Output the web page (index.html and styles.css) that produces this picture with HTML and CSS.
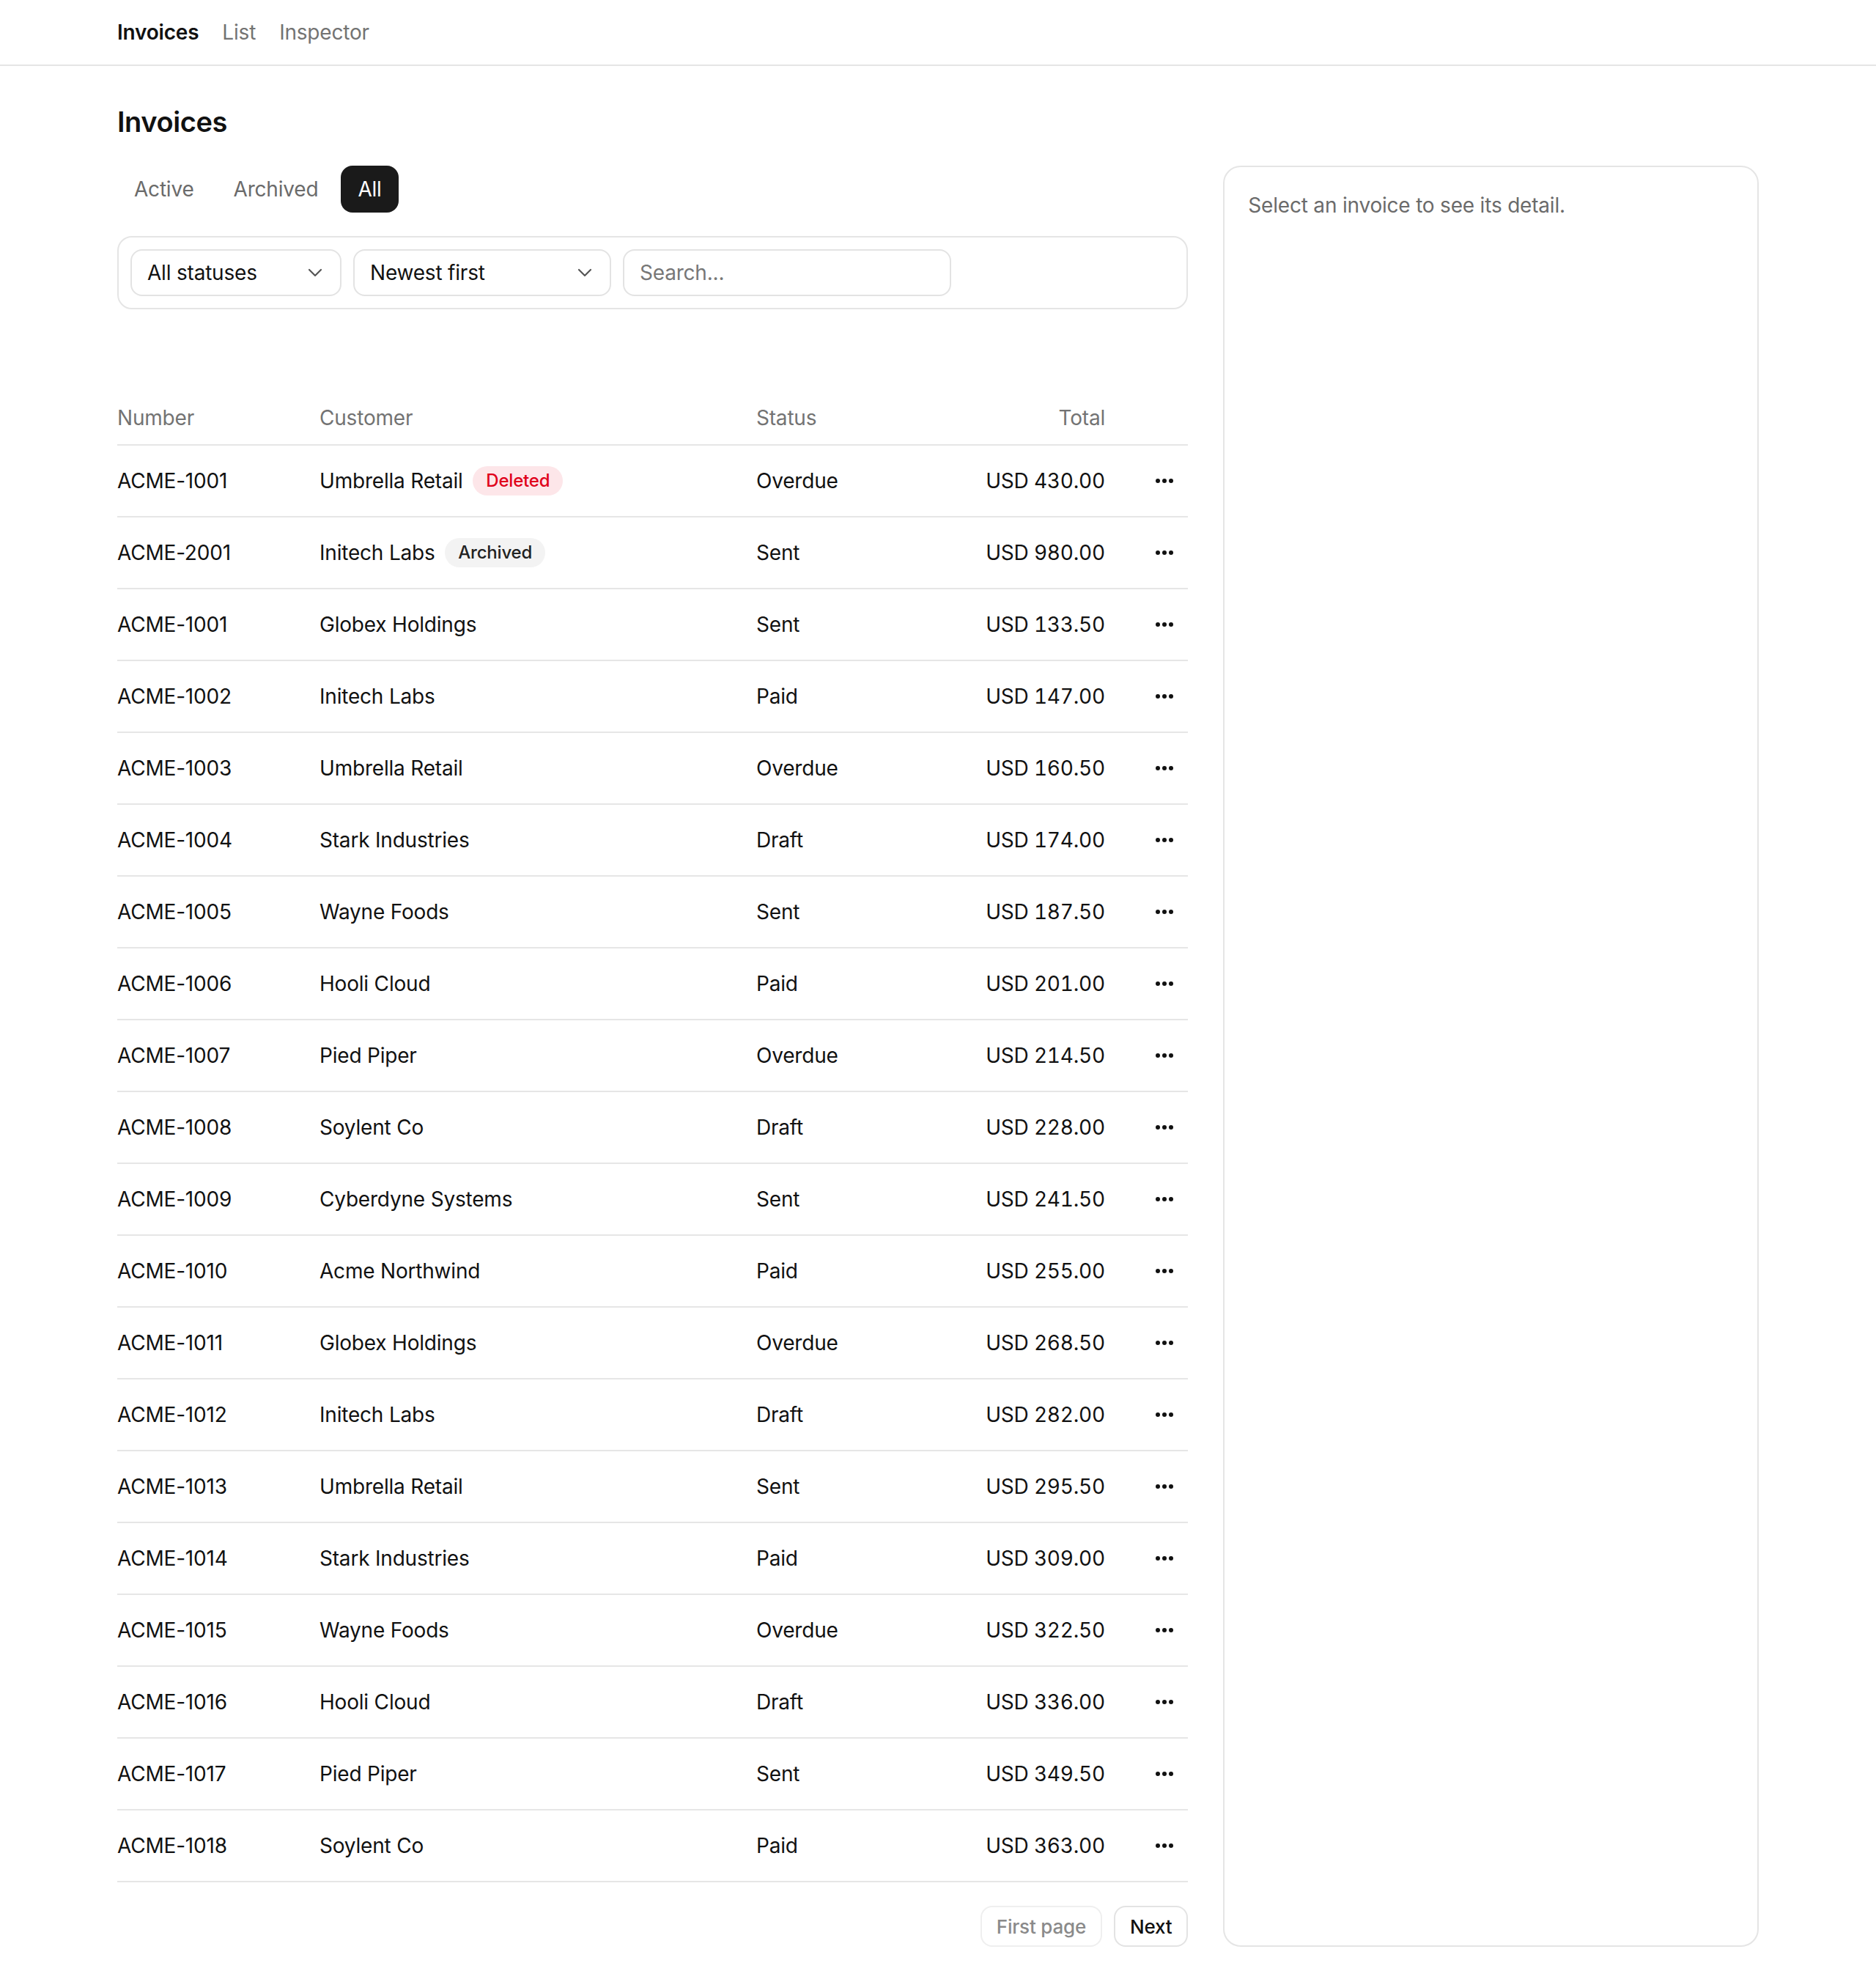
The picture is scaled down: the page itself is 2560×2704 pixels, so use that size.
FILE: index.html
```html
<!DOCTYPE html>
<html lang="en">
<head>
    <meta charset="UTF-8">
    <title>Invoices</title>
    <link rel="stylesheet" href="styles.css">
</head>
<body>
<header class="topbar">
    <nav class="topnav">
        <a href="#" class="active">Invoices</a>
        <a href="#">List</a>
        <a href="#">Inspector</a>
    </nav>
</header>
<main class="page">
    <h1 class="page-title">Invoices</h1>
    <div class="layout">
        <section class="main-col">
            <div class="tabs">
                <button class="tab">Active</button>
                <button class="tab">Archived</button>
                <button class="tab tab-active">All</button>
            </div>
            <div class="filters">
                <div class="dropdown dd-status">
                    <span>All statuses</span>
                    <svg class="chevron" viewBox="0 0 24 24"><path d="M6 9l6 6 6-6"/></svg>
                </div>
                <div class="dropdown dd-sort">
                    <span>Newest first</span>
                    <svg class="chevron" viewBox="0 0 24 24"><path d="M6 9l6 6 6-6"/></svg>
                </div>
                <input class="search" placeholder="Search..."/>
            </div>
            <table class="invoice-table">
                <colgroup>
                    <col class="c-number">
                    <col class="c-customer">
                    <col class="c-status">
                    <col class="c-total">
                    <col class="c-actions">
                </colgroup>
                <thead>
                <tr>
                    <th>Number</th>
                    <th>Customer</th>
                    <th>Status</th>
                    <th class="num">Total</th>
                    <th></th>
                </tr>
                </thead>
                <tbody>
                <tr><td>ACME-1001</td><td>Umbrella Retail <span class="badge badge-deleted">Deleted</span></td><td>Overdue</td><td class="num">USD 430.00</td><td class="act"><button class="more"><svg viewBox="0 0 24 24"><circle cx="3" cy="12" r="3"/><circle cx="12" cy="12" r="3"/><circle cx="21" cy="12" r="3"/></svg></button></td></tr>
                <tr><td>ACME-2001</td><td>Initech Labs <span class="badge badge-archived">Archived</span></td><td>Sent</td><td class="num">USD 980.00</td><td class="act"><button class="more"><svg viewBox="0 0 24 24"><circle cx="3" cy="12" r="3"/><circle cx="12" cy="12" r="3"/><circle cx="21" cy="12" r="3"/></svg></button></td></tr>
                <tr><td>ACME-1001</td><td>Globex Holdings</td><td>Sent</td><td class="num">USD 133.50</td><td class="act"><button class="more"><svg viewBox="0 0 24 24"><circle cx="3" cy="12" r="3"/><circle cx="12" cy="12" r="3"/><circle cx="21" cy="12" r="3"/></svg></button></td></tr>
                <tr><td>ACME-1002</td><td>Initech Labs</td><td>Paid</td><td class="num">USD 147.00</td><td class="act"><button class="more"><svg viewBox="0 0 24 24"><circle cx="3" cy="12" r="3"/><circle cx="12" cy="12" r="3"/><circle cx="21" cy="12" r="3"/></svg></button></td></tr>
                <tr><td>ACME-1003</td><td>Umbrella Retail</td><td>Overdue</td><td class="num">USD 160.50</td><td class="act"><button class="more"><svg viewBox="0 0 24 24"><circle cx="3" cy="12" r="3"/><circle cx="12" cy="12" r="3"/><circle cx="21" cy="12" r="3"/></svg></button></td></tr>
                <tr><td>ACME-1004</td><td>Stark Industries</td><td>Draft</td><td class="num">USD 174.00</td><td class="act"><button class="more"><svg viewBox="0 0 24 24"><circle cx="3" cy="12" r="3"/><circle cx="12" cy="12" r="3"/><circle cx="21" cy="12" r="3"/></svg></button></td></tr>
                <tr><td>ACME-1005</td><td>Wayne Foods</td><td>Sent</td><td class="num">USD 187.50</td><td class="act"><button class="more"><svg viewBox="0 0 24 24"><circle cx="3" cy="12" r="3"/><circle cx="12" cy="12" r="3"/><circle cx="21" cy="12" r="3"/></svg></button></td></tr>
                <tr><td>ACME-1006</td><td>Hooli Cloud</td><td>Paid</td><td class="num">USD 201.00</td><td class="act"><button class="more"><svg viewBox="0 0 24 24"><circle cx="3" cy="12" r="3"/><circle cx="12" cy="12" r="3"/><circle cx="21" cy="12" r="3"/></svg></button></td></tr>
                <tr><td>ACME-1007</td><td>Pied Piper</td><td>Overdue</td><td class="num">USD 214.50</td><td class="act"><button class="more"><svg viewBox="0 0 24 24"><circle cx="3" cy="12" r="3"/><circle cx="12" cy="12" r="3"/><circle cx="21" cy="12" r="3"/></svg></button></td></tr>
                <tr><td>ACME-1008</td><td>Soylent Co</td><td>Draft</td><td class="num">USD 228.00</td><td class="act"><button class="more"><svg viewBox="0 0 24 24"><circle cx="3" cy="12" r="3"/><circle cx="12" cy="12" r="3"/><circle cx="21" cy="12" r="3"/></svg></button></td></tr>
                <tr><td>ACME-1009</td><td>Cyberdyne Systems</td><td>Sent</td><td class="num">USD 241.50</td><td class="act"><button class="more"><svg viewBox="0 0 24 24"><circle cx="3" cy="12" r="3"/><circle cx="12" cy="12" r="3"/><circle cx="21" cy="12" r="3"/></svg></button></td></tr>
                <tr><td>ACME-1010</td><td>Acme Northwind</td><td>Paid</td><td class="num">USD 255.00</td><td class="act"><button class="more"><svg viewBox="0 0 24 24"><circle cx="3" cy="12" r="3"/><circle cx="12" cy="12" r="3"/><circle cx="21" cy="12" r="3"/></svg></button></td></tr>
                <tr><td>ACME-1011</td><td>Globex Holdings</td><td>Overdue</td><td class="num">USD 268.50</td><td class="act"><button class="more"><svg viewBox="0 0 24 24"><circle cx="3" cy="12" r="3"/><circle cx="12" cy="12" r="3"/><circle cx="21" cy="12" r="3"/></svg></button></td></tr>
                <tr><td>ACME-1012</td><td>Initech Labs</td><td>Draft</td><td class="num">USD 282.00</td><td class="act"><button class="more"><svg viewBox="0 0 24 24"><circle cx="3" cy="12" r="3"/><circle cx="12" cy="12" r="3"/><circle cx="21" cy="12" r="3"/></svg></button></td></tr>
                <tr><td>ACME-1013</td><td>Umbrella Retail</td><td>Sent</td><td class="num">USD 295.50</td><td class="act"><button class="more"><svg viewBox="0 0 24 24"><circle cx="3" cy="12" r="3"/><circle cx="12" cy="12" r="3"/><circle cx="21" cy="12" r="3"/></svg></button></td></tr>
                <tr><td>ACME-1014</td><td>Stark Industries</td><td>Paid</td><td class="num">USD 309.00</td><td class="act"><button class="more"><svg viewBox="0 0 24 24"><circle cx="3" cy="12" r="3"/><circle cx="12" cy="12" r="3"/><circle cx="21" cy="12" r="3"/></svg></button></td></tr>
                <tr><td>ACME-1015</td><td>Wayne Foods</td><td>Overdue</td><td class="num">USD 322.50</td><td class="act"><button class="more"><svg viewBox="0 0 24 24"><circle cx="3" cy="12" r="3"/><circle cx="12" cy="12" r="3"/><circle cx="21" cy="12" r="3"/></svg></button></td></tr>
                <tr><td>ACME-1016</td><td>Hooli Cloud</td><td>Draft</td><td class="num">USD 336.00</td><td class="act"><button class="more"><svg viewBox="0 0 24 24"><circle cx="3" cy="12" r="3"/><circle cx="12" cy="12" r="3"/><circle cx="21" cy="12" r="3"/></svg></button></td></tr>
                <tr><td>ACME-1017</td><td>Pied Piper</td><td>Sent</td><td class="num">USD 349.50</td><td class="act"><button class="more"><svg viewBox="0 0 24 24"><circle cx="3" cy="12" r="3"/><circle cx="12" cy="12" r="3"/><circle cx="21" cy="12" r="3"/></svg></button></td></tr>
                <tr><td>ACME-1018</td><td>Soylent Co</td><td>Paid</td><td class="num">USD 363.00</td><td class="act"><button class="more"><svg viewBox="0 0 24 24"><circle cx="3" cy="12" r="3"/><circle cx="12" cy="12" r="3"/><circle cx="21" cy="12" r="3"/></svg></button></td></tr>
                </tbody>
            </table>
            <div class="pager">
                <button class="pager-btn" disabled>First page</button>
                <button class="pager-btn">Next</button>
            </div>
        </section>
        <aside class="detail-panel">
            <p class="detail-empty">Select an invoice to see its detail.</p>
        </aside>
    </div>
</main>
</body>
</html>
```

FILE: styles.css
```css
* {
    box-sizing: border-box;
}

body {
    margin: 0;
    background: #fff;
    color: #111;
    font: 28px/40px Inter, "Noto Sans", sans-serif;
    letter-spacing: -0.2px;
}

button, input {
    font-family: inherit;
    letter-spacing: inherit;
}

/* top navigation */
.topbar {
    height: 90px;
    padding: 0 160px;
    border-bottom: 2px solid #e5e5e5;
    display: flex;
    align-items: center;
}

.topnav {
    display: flex;
    gap: 32px;
}

.topnav a {
    color: #737373;
    text-decoration: none;
}

.topnav a.active {
    color: #111;
    font-weight: 600;
}

/* page */
.page {
    padding: 46px 160px 48px;
}

.page-title {
    margin: 0 0 30px;
    font-size: 38px;
    line-height: 60px;
    font-weight: 600;
    letter-spacing: -0.4px;
}

.layout {
    display: grid;
    grid-template-columns: 2fr 1fr;
    gap: 48px;
}

/* tabs */
.tabs {
    display: flex;
    gap: 8px;
}

.tab {
    height: 64px;
    padding: 0 23px;
    border: none;
    border-radius: 16px;
    background: none;
    color: #6b6b6b;
    font-size: 28px;
}

.tab-active {
    background: #1a1a1a;
    color: #fff;
}

/* filter bar */
.filters {
    margin-top: 32px;
    padding: 16px;
    border: 2px solid #e5e5e5;
    border-radius: 20px;
    display: flex;
    gap: 16px;
}

.dropdown {
    height: 64px;
    padding: 0 18px 0 21px;
    border: 2px solid #e3e3e3;
    border-radius: 16px;
    display: flex;
    align-items: center;
    justify-content: space-between;
}

.dd-status {
    width: 288px;
}

.dd-sort {
    width: 352px;
}

.chevron {
    width: 32px;
    height: 32px;
    fill: none;
    stroke: #555;
    stroke-width: 1.6;
    stroke-linecap: round;
    stroke-linejoin: round;
}

.search {
    width: 448px;
    height: 64px;
    padding: 0 21px;
    border: 2px solid #e3e3e3;
    border-radius: 16px;
    font-size: 28px;
    color: #111;
    outline: none;
}

.search::placeholder {
    color: #777;
}

/* table */
.invoice-table {
    width: 100%;
    margin-top: 112px;
    border-collapse: collapse;
    table-layout: fixed;
}

.c-number { width: 276px; }
.c-customer { width: 596px; }
.c-status { width: 300px; }
.c-total { width: 176px; }

.invoice-table th {
    padding: 16px 0;
    border-bottom: 2px solid #e6e6e6;
    color: #737373;
    font-weight: 400;
    text-align: left;
}

.invoice-table td {
    height: 98px;
    padding: 0;
    border-bottom: 2px solid #e6e6e6;
    white-space: nowrap;
    vertical-align: middle;
}

.invoice-table .num {
    text-align: right;
    font-variant-numeric: tabular-nums;
}

.invoice-table .act {
    padding-right: 8px;
    text-align: right;
}

.more {
    width: 48px;
    height: 40px;
    padding: 0;
    border: none;
    background: none;
    display: inline-flex;
    align-items: center;
    justify-content: center;
    vertical-align: top;
}

.more svg {
    width: 24px;
    height: 24px;
    fill: #111;
}

.badge {
    display: inline-block;
    height: 40px;
    margin-left: 6px;
    padding: 0 18px;
    border-radius: 20px;
    font-size: 24px;
    line-height: 40px;
    font-weight: 500;
    vertical-align: top;
}

.badge-deleted {
    background: #fde6e9;
    color: #e0001a;
}

.badge-archived {
    background: #f3f3f3;
    color: #222;
}

/* pagination */
.pager {
    margin-top: 32px;
    display: flex;
    justify-content: flex-end;
    gap: 16px;
}

.pager-btn {
    height: 56px;
    padding: 0 20px;
    border: 2px solid #e3e3e3;
    border-radius: 16px;
    background: #fff;
    color: #111;
    font-size: 26px;
    font-weight: 500;
}

.pager-btn:disabled {
    border-color: #efefef;
    color: #8a8a8a;
}

/* detail panel */
.detail-panel {
    padding: 32px;
    border: 2px solid #e5e5e5;
    border-radius: 24px;
}

.detail-empty {
    margin: 0;
    color: #6b6b6b;
}
```
